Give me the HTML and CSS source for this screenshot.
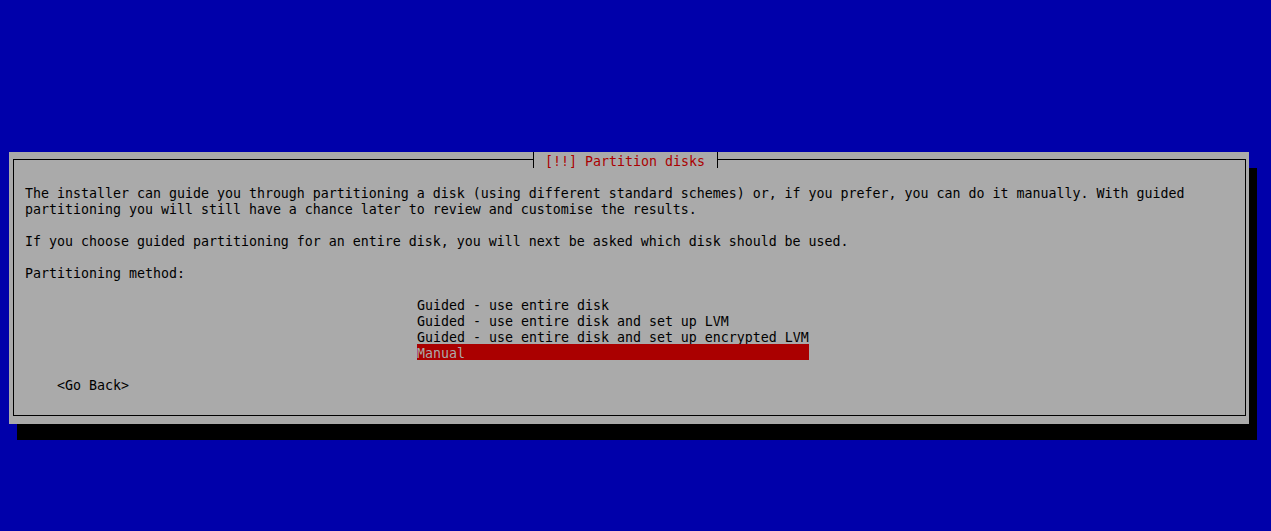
FILE: index.html
```html
<!DOCTYPE html>
<html>

<head>
    <title>Partition disks</title>
    <link rel="stylesheet" href="styles.css">
</head>

<body>
    <div class="dialog">
        <div class="frame">
            <div class="title">[!!] Partition disks</div>

            <p>The installer can guide you through partitioning a disk (using different standard schemes) or, if you prefer, you can do it manually. With guided<br>partitioning you will still have a chance later to review and customise the results.</p>
            <p>If you choose guided partitioning for an entire disk, you will next be asked which disk should be used.</p>
            <p>Partitioning method:</p>

            <div class="menu">
                <div class="item">Guided - use entire disk</div>
                <div class="item">Guided - use entire disk and set up LVM</div>
                <div class="item">Guided - use entire disk and set up encrypted LVM</div>
                <div class="item selected">Manual</div>
            </div>

            <div class="back">&lt;Go Back&gt;</div>
        </div>
    </div>
</body>

</html>
```

FILE: styles.css
```css
body {
    margin: 0;
    min-height: 100vh;
    box-sizing: border-box;
    padding: 152px 0 0 9px;
    background-color: #0000AA;
    font-family: "DejaVu Sans Mono", monospace;
    font-size: 13.29px;
    line-height: 16px;
    color: #000;
}

.dialog {
    width: 1240px;
    box-sizing: border-box;
    padding: 7px 3px 8px 4px;
    background-color: #AAAAAA;
    box-shadow: 8px 16px 0 #000;
}

.frame {
    position: relative;
    border: 1px solid #000;
    padding: 24px 0 23px 11px;
}

/* text sits 2px low in its 16px cell, like the console font */
.title,
.item,
.back {
    height: 16px;
    box-sizing: border-box;
    padding-top: 2px;
    white-space: pre;
}

.title {
    position: absolute;
    top: -8px;
    left: 519px;
    padding-left: 11px;
    padding-right: 12px;
    border-left: 1px solid #000;
    border-right: 1px solid #000;
    background-color: #AAAAAA;
    color: #AA0000;
}

p {
    margin: 0 0 14px 0;
    padding-top: 2px;
    white-space: nowrap;
}

.menu {
    display: grid;
    width: max-content;
    margin: 0 0 16px 392px;
}

.item.selected {
    background-color: #AA0000;
    color: #AAAAAA;
}

.back {
    margin-left: 32px;
}
```
